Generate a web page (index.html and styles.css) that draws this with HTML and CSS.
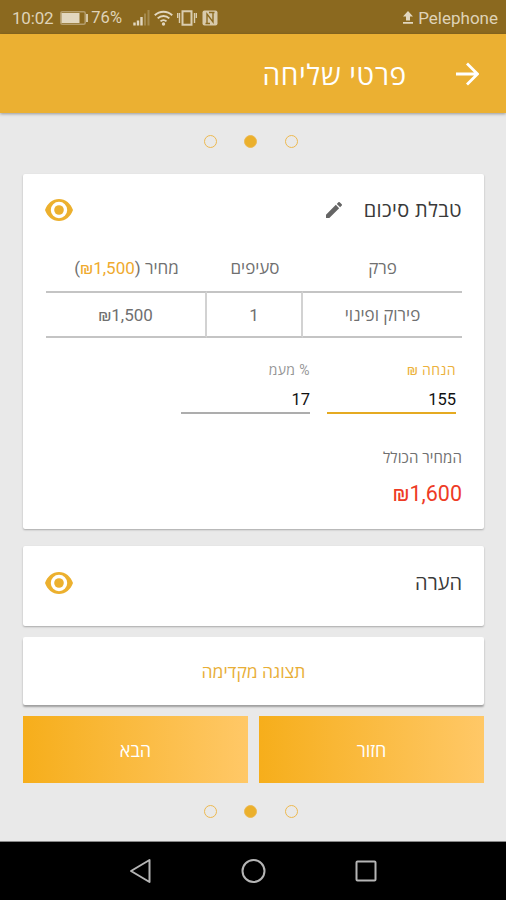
FILE: index.html
```html
<!DOCTYPE html>
<html lang="he" dir="rtl">
<head>
<meta charset="utf-8">
<title>פרטי שליחה</title>
<link rel="stylesheet" href="styles.css">
</head>
<body>
<div class="status" dir="ltr">
  <span class="clock">10:02</span>
  <svg class="battery" width="29" height="14" viewBox="0 0 29 14"><rect x=".8" y=".8" width="24.4" height="12.4" rx="1.5" fill="none" stroke="#b49d6c" stroke-width="1.5"/><rect x="1.500" y="2" width="18" height="10" fill="#e2d7bf"/><path d="M27 3v8" stroke="#d4c6a5" stroke-width="2"/></svg>
  <span class="percent">76%</span>
  <svg class="signal" width="17" height="16" viewBox="0 0 17 16"><path d="M1.500 12.500v3M5 10.500v5M8.500 7v8.500" stroke="#e2d7bf" stroke-width="2.400"/><path d="M12 3.500v12M15.500 0v15.500" stroke="#a48a4f" stroke-width="2"/></svg>
  <svg class="wifi" width="19" height="16" viewBox="0 0 19 16"><path d="M.8 5.300a12.500 12.500 0 0 1 17.400 0M3.700 8.400a8.300 8.300 0 0 1 11.600 0M6.500 11.400a4.300 4.300 0 0 1 6 0" fill="none" stroke="#e2d7bf" stroke-width="2"/><circle cx="9.500" cy="14" r="1.700" fill="#e2d7bf"/></svg>
  <svg class="vibrate" width="20" height="16" viewBox="0 0 20 16"><path d="M5.500 1.200h9v13.600h-9z" fill="none" stroke="#dacdaf" stroke-width="2"/><path d="M2.500 3v10M17.500 3v10M.6 3v5M19.400 3v5" stroke="#dacdaf" stroke-width="1.400"/></svg>
  <svg class="nfc" width="16" height="16" viewBox="0 0 16 16"><rect x=".5" y=".5" width="15" height="15" rx="2" fill="#d8caab"/><path d="M5 13.500V4l6 8V2.500M7 2.500h5.500M3.500 13.500H8" fill="none" stroke="#8b691f" stroke-width="1.400"/></svg>
  <span class="grow"></span>
  <svg class="upload" width="12" height="13" viewBox="0 0 12 13"><path d="M6 0l5 5.500H8V9.500H4V5.500H1zM1 11h10v1.800H1z" fill="#e2d7bf"/></svg>
  <span class="carrier">Pelephone</span>
</div>
<header class="appbar">
  <svg width="24" height="24" viewBox="0 0 24 24"><path d="M1 12h21M12 1.500L22.500 12 12 22.500" fill="none" stroke="#fff" stroke-width="2.800"/></svg>
  <h1>פרטי שליחה</h1>
</header>
<main>
  <div class="dots"><i></i><i class="on"></i><i></i></div>
  <section class="card summary">
    <div class="card-head">
      <h2>טבלת סיכום</h2>
      <svg class="pencil" width="16" height="16" viewBox="3 3 18 18"><path fill="#656565" d="M3 17.250V21h3.750L17.810 9.940l-3.750-3.750L3 17.250zM20.710 7.040a1 1 0 0 0 0-1.410l-2.340-2.340a1 1 0 0 0-1.410 0l-1.830 1.830 3.750 3.750 1.830-1.830z"/></svg>
      <span class="grow"></span>
      <svg class="eye" width="28" height="22" viewBox="0 0 28 22"><path fill="#ecb02e" fill-rule="evenodd" d="M14 0C7.600 0 2.200 4.500 0 11c2.200 6.500 7.600 11 14 11s11.800-4.500 14-11C25.800 4.500 20.400 0 14 0zM14 2.800a8.200 8.200 0 1 1 0 16.400a8.200 8.200 0 0 1 0-16.400z"/><circle cx="14" cy="11" r="4.800" fill="#ecb02e"/></svg>
    </div>
    <div class="table">
      <div class="th">פרק</div><div class="th">סעיפים</div><div class="th">מחיר (<b>₪1,500</b>)</div>
      <div class="td">פירוק ופינוי</div><div class="td">1</div><div class="td">₪1,500</div>
    </div>
    <div class="fields">
      <label class="field active"><span>הנחה ₪</span><output>155</output></label>
      <label class="field"><span>% מעמ</span><output>17</output></label>
    </div>
    <div class="total-label">המחיר הכולל</div>
    <div class="total">₪1,600</div>
  </section>
  <section class="card note">
    <h2>הערה</h2>
    <svg class="eye" width="28" height="22" viewBox="0 0 28 22"><path fill="#ecb02e" fill-rule="evenodd" d="M14 0C7.600 0 2.200 4.500 0 11c2.200 6.500 7.600 11 14 11s11.800-4.500 14-11C25.800 4.500 20.400 0 14 0zM14 2.800a8.200 8.200 0 1 1 0 16.400a8.200 8.200 0 0 1 0-16.400z"/><circle cx="14" cy="11" r="4.800" fill="#ecb02e"/></svg>
  </section>
  <div class="card preview">תצוגה מקדימה</div>
  <div class="buttons"><div class="button">חזור</div><div class="button">הבא</div></div>
  <div class="dots bottom"><i></i><i class="on"></i><i></i></div>
</main>
<nav class="nav" dir="ltr">
  <svg width="22" height="26" viewBox="0 0 22 26"><path d="M20.500 2v22L2 13z" fill="none" stroke="#b5b5b5" stroke-width="2" stroke-linejoin="round"/></svg>
  <svg width="26" height="26" viewBox="0 0 26 26"><circle cx="13.500" cy="13" r="11" fill="none" stroke="#b5b5b5" stroke-width="2"/></svg>
  <svg width="22" height="22" viewBox="0 0 22 22"><rect x="1.500" y="1.500" width="19" height="19" rx="1" fill="none" stroke="#b5b5b5" stroke-width="2"/></svg>
</nav>
</body>
</html>
```
FILE: styles.css
```css
* { box-sizing: border-box; }
body {
  margin: 0;
  width: 506px;
  height: 900px;
  display: flex;
  flex-direction: column;
  overflow: hidden;
  background: #e9e9e9;
  color: #707070;
  font-family: Roboto, "Open Sans", "Noto Sans", sans-serif;
}
svg { display: block; flex: none; }
h1, h2 { margin: 0; font-weight: 400; white-space: nowrap; }
.grow { flex: 1; }
.status {
  height: 34px;
  flex: none;
  display: flex;
  align-items: center;
  padding: 1px 8px 0 12px;
  background: #8b691f;
  color: #dfd3b8;
  font-size: 17px;
}
.clock { letter-spacing: -.2px; }
.battery { margin-left: 7px; }
.percent { margin-left: 2px; font-size: 16.500px; }
.signal { margin-left: 11px; }
.wifi { margin-left: 4px; }
.vibrate { margin-left: 4px; }
.nfc { margin-left: 5px; }
.upload { margin-right: 4px; }
.appbar {
  height: 79px;
  flex: none;
  display: flex;
  align-items: center;
  padding: 0 27px 0 0;
  background: #ebb032;
  color: #fff;
  box-shadow: 0 1px 3px rgba(0, 0, 0, .35);
  z-index: 1;
}
.appbar h1 { margin-right: 48px; font-size: 28px; letter-spacing: .75px; }
main { flex: 1; padding: 0 22px 0 23px; }
.dots {
  display: flex;
  justify-content: center;
  gap: 27.500px;
  padding: 22px 5.500px 0 0;
  height: 61px;
}
.dots.bottom { height: auto; padding-top: 22px; }
.dots i { width: 13px; height: 13px; border: 1.500px solid #edb950; border-radius: 50%; }
.dots .on { background: #ebb02c; }
.card {
  background: #fff;
  border-radius: 2px;
  box-shadow: 0 1px 2px rgba(0, 0, 0, .28);
}
.summary { height: 355px; padding: 18px 22px 0 23px; }
.card-head { display: flex; align-items: center; height: 36px; }
h2 { color: #393939; font-size: 20px; line-height: 28px; }
.card-head h2 { letter-spacing: .4px; }
.eye { margin-left: -1px; }
.pencil { margin-right: 22px; }
.table {
  margin-top: 17px;
  display: grid;
  grid-template-columns: 159px 96px 161px;
  grid-template-rows: 46px 47px;
  text-align: center;
  font-size: 17px;
}
.th { line-height: 46px; white-space: nowrap; }
.th b { color: #efaa2e; font-weight: 400; }
.td {
  border-top: 2px solid #c4c4c4;
  border-bottom: 2px solid #c4c4c4;
  line-height: 45px;
  white-space: nowrap;
}
.td + .td { border-right: 2px solid #d2d2d2; }
.fields { display: flex; gap: 17px; margin-top: 22px; padding-right: 6px; }
.field { width: 129px; height: 54px; display: flex; flex-direction: column; border-bottom: 2px solid #adadad; color: #969696; }
.field span { font-size: 14px; line-height: 20px; letter-spacing: .4px; }
.field output { font-size: 16.500px; line-height: 20px; margin-top: 10px; color: #111; }
.active { border-bottom-color: #e5aa21; color: #ecb13b; }
.total-label { margin-top: 33px; font-size: 15px; line-height: 22px; letter-spacing: .1px; }
.total { margin-top: 12px; font-size: 21.500px; line-height: 26px; color: #ee3b25; }
.note { margin-top: 17px; height: 80px; padding: 0 22px 6px 23px; display: flex; align-items: center; justify-content: space-between; }
.preview { margin-top: 11px; height: 68px; line-height: 70px; text-align: center; color: #e8ae36; font-size: 17.500px; box-shadow: 0 2px 2px rgba(0, 0, 0, .32); }
.buttons { margin-top: 11px; display: flex; gap: 11px; }
.button { flex: 1; height: 67px; line-height: 69px; text-align: center; color: #fff; font-size: 18px; background: linear-gradient(90deg, #f6ae1b, #ffc867); }
.nav {
  height: 59px;
  flex: none;
  display: flex;
  align-items: center;
  justify-content: center;
  gap: 89px;
  background: #000;
  border-top: 1px solid #888;
}
```
